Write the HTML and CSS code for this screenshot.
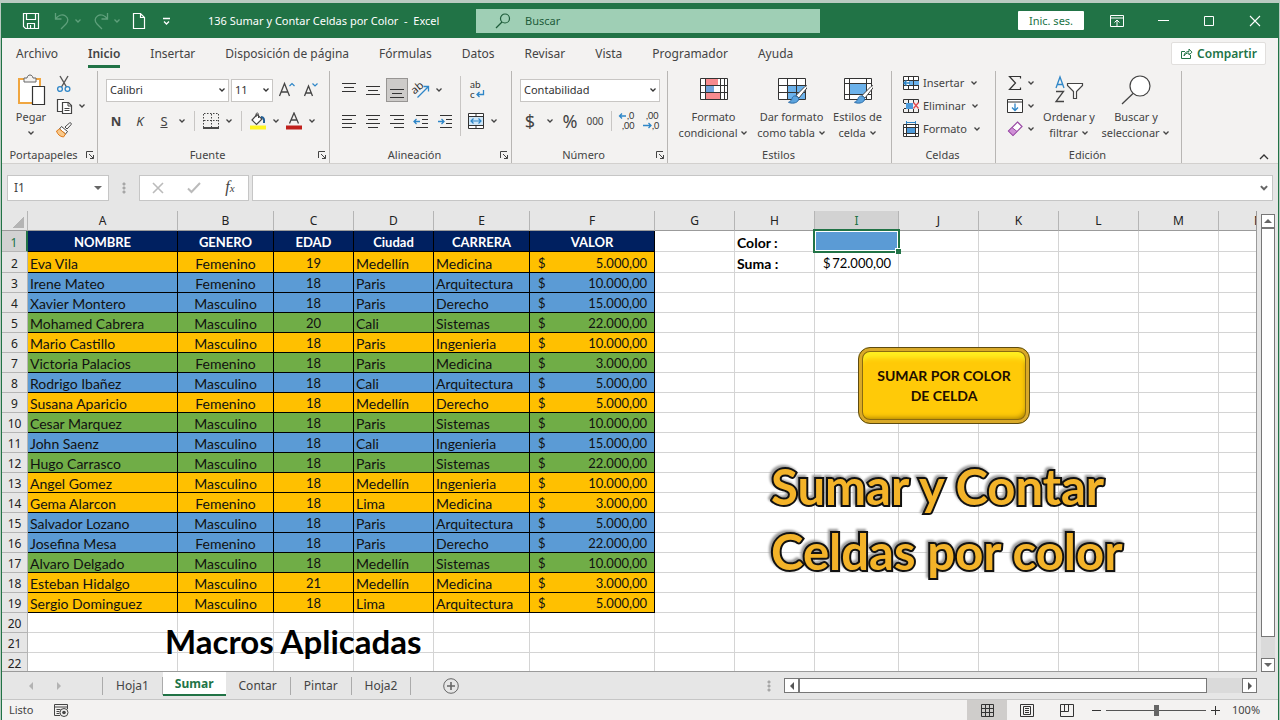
FILE: index.html
```
<!DOCTYPE html>
<html lang="es">
<head>
    <meta charset="UTF-8">
    <meta name="viewport" content="width=device-width, initial-scale=1.0">
    <title>136 Sumar y Contar Celdas por Color - Excel</title>
    <link rel="stylesheet" href="styles.css">
</head>
<body>
    <svg class="symbols" aria-hidden="true">
        <symbol id="chev" viewBox="0 0 8 8"><path d="M1.500 2.500L4 5l2.500-2.500" fill="none" stroke="currentColor" stroke-width="1.300"/></symbol>
        <symbol id="launch" viewBox="0 0 10 10"><path d="M1.500 8V1.500H8M4 4l4.500 4.500M8.500 5v3.500H5" fill="none" stroke="currentColor"/></symbol>
        <symbol id="brush" viewBox="0 0 22 20"><path d="M20.500 .5c1 .6 1 1.500.4 2.500L13 13l-3-2.500L19 1.500z" fill="#fff" stroke="#444"/><path d="M10 11c-2-.4-3.500.6-4 2.500-.4 1.800-1.500 3-3.500 3.800 3 1.500 8.500 1.200 10-2.300.6-1.500-.6-3.500-2.500-4z" fill="#5ba3dd" stroke="#2b6ca8"/></symbol>
    </svg>
    <div class="window">
        <header class="titlebar">
            <div class="quick">
                <button aria-label="Guardar"><svg width="18" height="18" viewBox="0 0 18 18"><path d="M1.500 1.500h15v15h-13l-2-2zM4.500 1.500v6h9v-6M5.500 16.500v-5h7v5M8.500 16v-3" fill="none" stroke="#fff" stroke-width="1.200"/></svg></button>
                <button class="off" aria-label="Deshacer"><svg width="16" height="18" viewBox="0 0 16 18"><path d="M1.500 1v6h6M1.500 7C4 3.500 8 1.800 11.500 4c3 2 3 5.500.5 8l-5 5" fill="none" stroke="currentColor" stroke-width="1.300"/></svg><svg width="8" height="8"><use href="#chev"/></svg></button>
                <button class="off" aria-label="Rehacer"><svg width="16" height="18" viewBox="0 0 16 18"><path d="M14.500 1v6h-6M14.500 7C12 3.500 8 1.800 4.500 4c-3 2-3 5.500-.5 8l5 5" fill="none" stroke="currentColor" stroke-width="1.300"/></svg><svg width="8" height="8"><use href="#chev"/></svg></button>
                <button aria-label="Nuevo"><svg width="14" height="18" viewBox="0 0 14 18"><path d="M1.500 1.500h7l4 4v11h-11zM8.500 1.500v4h4" fill="none" stroke="#fff" stroke-width="1.200"/></svg></button>
                <button aria-label="Personalizar"><svg width="9" height="8" viewBox="0 0 9 8"><path d="M1 1.500h7M2 4.500L4.500 7 7 4.500" fill="none" stroke="#fff" stroke-width="1.300"/></svg></button>
            </div>
            <h1 class="doc-title">136 Sumar y Contar Celdas por Color&nbsp; -&nbsp; Excel</h1>
            <label class="search">
                <svg width="16" height="16" viewBox="0 0 16 16"><circle cx="10" cy="5.500" r="4.500" fill="none" stroke="#1e5c3a" stroke-width="1.200"/><path d="M7 9l-6 6" stroke="#1e5c3a" stroke-width="1.200"/></svg>
                <input type="text" placeholder="Buscar" aria-label="Buscar">
            </label>
            <button class="signin">Inic. ses.</button>
            <div class="win-buttons">
                <button aria-label="Opciones de la cinta"><svg width="14" height="12" viewBox="0 0 14 12"><path d="M.5.5h13v11H.5zM.5 3h13M7 11V5M4.500 7.500L7 5l2.500 2.500" fill="none" stroke="#fff"/></svg></button>
                <button aria-label="Minimizar"><svg width="12" height="12" viewBox="0 0 12 12"><path d="M1 5.500h11" stroke="#fff"/></svg></button>
                <button aria-label="Maximizar"><svg width="12" height="12" viewBox="0 0 12 12"><path d="M1.500 1.500h9v9h-9z" fill="none" stroke="#fff"/></svg></button>
                <button aria-label="Cerrar"><svg width="12" height="12" viewBox="0 0 12 12"><path d="M1 1l10 10M11 1L1 11" stroke="#fff" stroke-width="1.100"/></svg></button>
            </div>
        </header>

        <nav class="tabs">
            <a href="#">Archivo</a>
            <a href="#" class="active">Inicio</a>
            <a href="#">Insertar</a>
            <a href="#">Disposición de página</a>
            <a href="#">Fórmulas</a>
            <a href="#">Datos</a>
            <a href="#">Revisar</a>
            <a href="#">Vista</a>
            <a href="#">Programador</a>
            <a href="#">Ayuda</a>
            <button class="share"><svg width="13" height="13" viewBox="0 0 13 13"><path d="M5 4.500H1.500v7h9V8M4 9c.3-3 2-4.500 5-4.500V2L12 5.200 9 8V6C6.500 6 5 7 4 9z" fill="none" stroke="#217346"/></svg>Compartir</button>
        </nav>

        <section class="ribbon">
            <div class="group clipboard">
                <div class="tools">
                    <button class="big"><svg width="30" height="32" viewBox="0 0 30 32"><path d="M3 5h21v24H3z" fill="#fff" stroke="#f0a640" stroke-width="2"/><path d="M8 8V4h3c.4-2 1.500-3 3-3s2.600 1 3 3h3v4z" fill="#f3f2f1" stroke="#666"/><path d="M16.500 12.500h12v18h-12z" fill="#fff" stroke="#333" stroke-width="1.200"/></svg><span>Pegar</span><svg width="8" height="16"><use href="#chev"/></svg></button>
                    <div class="stack">
                        <button class="ico" aria-label="Cortar"><svg width="16" height="18" viewBox="0 0 16 18"><path d="M4 1l6.500 11M12 1L5.500 12" stroke="#555" stroke-width="1.400"/><circle cx="4" cy="14" r="2.400" fill="none" stroke="#2e86c8" stroke-width="1.300"/><circle cx="11.500" cy="14" r="2.400" fill="none" stroke="#2e86c8" stroke-width="1.300"/></svg></button>
                        <button class="ico" aria-label="Copiar"><svg width="17" height="17" viewBox="0 0 17 17"><path d="M6 13.500H1.500v-12H8M6.500 4.500h6l3 3v8h-9z" fill="#fff" stroke="#444" stroke-width="1.200"/><path d="M12 4.500V8h3.500M8.500 10.500h5M8.500 12.500h5" fill="none" stroke="#444"/></svg></button>
                        <button class="ico" aria-label="Copiar formato"><svg width="18" height="16" viewBox="0 0 18 16"><path d="M10 5l4.500-4c1-.8 2.500.6 1.500 1.700L12 7z" fill="#fff" stroke="#444"/><path d="M6.500 4.500l6 5-2 2.500-6-5z" fill="#fff" stroke="#444"/><path d="M4.500 7l6 5-2 3C5 14.500 2.500 12.500 1.500 9z" fill="#f9c98b" stroke="#e07b1a"/></svg></button>
                    </div>
                    <button class="more middle" aria-label="Opciones de copia"><svg width="8" height="8"><use href="#chev"/></svg></button>
                </div>
                <footer><span>Portapapeles</span><button aria-label="Más"><svg width="10" height="10"><use href="#launch"/></svg></button></footer>
            </div>

            <div class="group font">
                <div class="tools rows">
                    <div class="line">
                        <select class="family" aria-label="Fuente"><option>Calibri</option></select>
                        <select class="size" aria-label="Tamaño"><option>11</option></select>
                        <button class="ico" aria-label="Aumentar"><svg width="18" height="18" viewBox="0 0 18 18"><path d="M1.500 15L6.500 2.500 11.500 15M3.200 11h6.600" fill="none" stroke="#444" stroke-width="1.300"/><path d="M11.500 5L14 2.500 16.500 5" fill="none" stroke="#2e86c8" stroke-width="1.200"/></svg></button>
                        <button class="ico" aria-label="Disminuir"><svg width="18" height="18" viewBox="0 0 18 18"><path d="M2.500 15l4-10 4 10M3.800 12h5.400" fill="none" stroke="#444" stroke-width="1.300"/><path d="M10.500 2.500L13 5l2.500-2.500" fill="none" stroke="#2e86c8" stroke-width="1.200"/></svg></button>
                    </div>
                    <div class="line">
                        <button class="ico"><b>N</b></button>
                        <button class="ico"><i>K</i></button>
                        <button class="ico"><u>S</u></button>
                        <button class="more" aria-label="Subrayado"><svg width="8" height="8"><use href="#chev"/></svg></button>
                        <span class="rule"></span>
                        <button class="ico" aria-label="Bordes"><svg width="16" height="16" viewBox="0 0 16 16"><path d="M1 .5h15M.5 1v13M15.500 1v13M8.500 1v13M1 7.500h14" fill="none" stroke="#444" stroke-dasharray="1.500 1.500"/><path d="M0 15h16" stroke="#111" stroke-width="1.500"/></svg></button>
                        <button class="more" aria-label="Más bordes"><svg width="8" height="8"><use href="#chev"/></svg></button>
                        <span class="rule"></span>
                        <button class="ico" aria-label="Color de relleno"><svg width="18" height="18" viewBox="0 0 18 18"><path d="M8 2.500L3 8l4.500 4.500L13 7z" fill="#fff" stroke="#444" stroke-width="1.200"/><path d="M7 5V2.500C7 .5 9.500.5 9.500 2.500V6" fill="none" stroke="#444"/><path d="M12 5c2.500 0 3.500 2 3 6" fill="none" stroke="#1f5c93" stroke-width="2"/><path d="M1 13.500h16v4H1z" fill="#fff420"/></svg></button>
                        <button class="more" aria-label="Más rellenos"><svg width="8" height="8"><use href="#chev"/></svg></button>
                        <button class="ico" aria-label="Color de fuente"><svg width="18" height="18" viewBox="0 0 18 18"><path d="M4.500 11.500L9 1l4.500 10.500M6 8h6" fill="none" stroke="#444" stroke-width="1.300"/><path d="M1 13.500h16v4H1z" fill="#c0201c"/></svg></button>
                        <button class="more" aria-label="Más colores"><svg width="8" height="8"><use href="#chev"/></svg></button>
                    </div>
                </div>
                <footer><span>Fuente</span><button aria-label="Más"><svg width="10" height="10"><use href="#launch"/></svg></button></footer>
            </div>

            <div class="group align">
                <div class="tools">
                    <div class="rows">
                        <div class="line">
                            <button class="ico" aria-label="Arriba"><svg width="16" height="16" viewBox="0 0 16 16"><path d="M1 1.500h14M3 5.500h10M1 9.500h14" stroke="#333" stroke-width="1.200"/></svg></button>
                            <button class="ico" aria-label="Medio"><svg width="16" height="16" viewBox="0 0 16 16"><path d="M1 4.500h14M3 8.500h10M1 12.500h14" stroke="#333" stroke-width="1.200"/></svg></button>
                            <button class="ico on" aria-label="Abajo"><svg width="16" height="16" viewBox="0 0 16 16"><path d="M1 7.500h14M3 11.500h10M1 15.500h14" stroke="#333" stroke-width="1.200"/></svg></button>
                            <button class="ico" aria-label="Orientación"><svg width="24" height="24" viewBox="0 0 24 24"><text x="3" y="14" font-size="11" fill="#333" transform="rotate(-40 8 12)">ab</text><path d="M8.500 19.500L19 9M14.500 8.500H19.500V13.500" fill="none" stroke="#2e86c8" stroke-width="1.300"/></svg></button>
                            <button class="more" aria-label="Más orientación"><svg width="8" height="8"><use href="#chev"/></svg></button>
                        </div>
                        <div class="line">
                            <button class="ico" aria-label="Izquierda"><svg width="16" height="16" viewBox="0 0 16 16"><path d="M1 2.500h14M1 6.500h10M1 10.500h14M1 14.500h10" stroke="#333" stroke-width="1.200"/></svg></button>
                            <button class="ico" aria-label="Centrar"><svg width="16" height="16" viewBox="0 0 16 16"><path d="M1 2.500h14M3 6.500h10M1 10.500h14M3 14.500h10" stroke="#333" stroke-width="1.200"/></svg></button>
                            <button class="ico" aria-label="Derecha"><svg width="16" height="16" viewBox="0 0 16 16"><path d="M1 2.500h14M5 6.500h10M1 10.500h14M5 14.500h10" stroke="#333" stroke-width="1.200"/></svg></button>
                            <button class="ico" aria-label="Disminuir sangría"><svg width="16" height="16" viewBox="0 0 16 16"><path d="M3 2.500h12M9 6.500h6M9 10.500h6M3 14.500h12" stroke="#333" stroke-width="1.200"/><path d="M7 8.500H1M3.500 6L1 8.500 3.500 11" fill="none" stroke="#2e86c8" stroke-width="1.300"/></svg></button>
                            <button class="ico" aria-label="Aumentar sangría"><svg width="16" height="16" viewBox="0 0 16 16"><path d="M3 2.500h12M9 6.500h6M9 10.500h6M3 14.500h12" stroke="#333" stroke-width="1.200"/><path d="M1 8.500h6M4.500 6L7 8.500 4.500 11" fill="none" stroke="#2e86c8" stroke-width="1.300"/></svg></button>
                        </div>
                    </div>
                    <span class="rule tall"></span>
                    <div class="rows">
                        <div class="line">
                            <button class="ico" aria-label="Ajustar texto"><svg class="glyphs" width="20" height="24" viewBox="0 0 20 24"><text x="4" y="10" font-size="10">ab</text><text x="4" y="20" font-size="10">c</text><path d="M17.500 12v4.500H11M13.500 14L11 16.500l2.500 2.500" fill="none" stroke="#2e86c8" stroke-width="1.300"/></svg></button>
                        </div>
                        <div class="line">
                            <button class="ico" aria-label="Combinar"><svg width="16" height="16" viewBox="0 0 16 16"><path d="M.5.5h15v15H.5zM.5 3.500h15M.5 12.500h15M8 .5v3M8 12.500v3" fill="#fff" stroke="#333"/><path d="M1 4h14v8H1z" fill="#cfe6f7"/><path d="M3 8h10M5.500 5.500L3 8l2.500 2.500M10.500 5.500L13 8l-2.500 2.500" fill="none" stroke="#2e86c8" stroke-width="1.200"/></svg></button>
                            <button class="more" aria-label="Más combinar"><svg width="8" height="8"><use href="#chev"/></svg></button>
                        </div>
                    </div>
                </div>
                <footer><span>Alineación</span><button aria-label="Más"><svg width="10" height="10"><use href="#launch"/></svg></button></footer>
            </div>

            <div class="group number">
                <div class="tools rows">
                    <div class="line">
                        <select class="format" aria-label="Formato de número"><option>Contabilidad</option></select>
                    </div>
                    <div class="line">
                        <button class="ico large">$</button>
                        <button class="more" aria-label="Monedas"><svg width="8" height="8"><use href="#chev"/></svg></button>
                        <button class="ico large">%</button>
                        <button class="ico zeros">000</button>
                        <span class="rule"></span>
                        <button class="ico" aria-label="Aumentar decimales"><svg class="glyphs" width="20" height="24" viewBox="0 0 20 24"><text x="10" y="10" font-size="9">,0</text><text x="5" y="20" font-size="9">,00</text><path d="M9 7H2.500M5 4.500L2.500 7 5 9.500" fill="none" stroke="#2e86c8" stroke-width="1.300"/></svg></button>
                        <button class="ico" aria-label="Disminuir decimales"><svg class="glyphs" width="20" height="24" viewBox="0 0 20 24"><text x="5" y="10" font-size="9">,00</text><text x="11" y="20" font-size="9">,0</text><path d="M2 16.500h8M7.500 14L10 16.500 7.500 19" fill="none" stroke="#2e86c8" stroke-width="1.300"/></svg></button>
                    </div>
                </div>
                <footer><span>Número</span><button aria-label="Más"><svg width="10" height="10"><use href="#launch"/></svg></button></footer>
            </div>

            <div class="group styles">
                <div class="tools">
                    <button class="big"><svg width="30" height="32" viewBox="0 0 30 32"><path d="M1.500 4.500h27v21h-27z" fill="#fff" stroke="#333"/><path d="M7 5h12v7H7zM7 18h14v7H7z" fill="#f78b8f"/><path d="M7 12h8v6H7z" fill="#6fa3dc"/><path d="M6.500 5v20M21.500 5v20M25.500 5v20M2 11.500h26M2 18.500h26" stroke="#333" fill="none"/></svg><span>Formato<br>condicional <svg width="8" height="8"><use href="#chev"/></svg></span></button>
                    <button class="big"><svg width="30" height="32" viewBox="0 0 30 32"><path d="M1.500 4.500h27v21h-27z" fill="#fff" stroke="#333"/><path d="M11 11h17v14H11z" fill="#6cb2eb"/><path d="M10.500 5v20M19.500 5v20M2 11.500h26M2 18.500h26" stroke="#333" fill="none"/><use href="#brush" x="9" y="11" width="22" height="20"/></svg><span>Dar formato<br>como tabla <svg width="8" height="8"><use href="#chev"/></svg></span></button>
                    <button class="big"><svg width="30" height="32" viewBox="0 0 30 32"><path d="M1.500 4.500h27v21h-27z" fill="#fff" stroke="#333"/><path d="M6.500 5v20M23.500 5v20M2 9.500h26M2 20.500h26" stroke="#333" fill="none"/><path d="M7 10h16v10H7z" fill="#6cb2eb"/><use href="#brush" x="9" y="11" width="22" height="20"/></svg><span>Estilos de<br>celda <svg width="8" height="8"><use href="#chev"/></svg></span></button>
                </div>
                <footer><span>Estilos</span></footer>
            </div>

            <div class="group cells">
                <div class="tools">
                    <div class="stack">
                        <button class="wide"><svg width="16" height="16" viewBox="0 0 16 16"><path d="M.5 1.500h15v13H.5z" fill="#fff" stroke="#333"/><path d="M6 5h10v6H6z" fill="#6cb2eb"/><path d="M5.500 2v3M10.500 2v12M5.500 11v3M1 5.500h15M1 10.500h15" stroke="#333" fill="none"/><path d="M7 8H1M3.500 5.500L1 8l2.500 2.500" fill="none" stroke="#2e86c8" stroke-width="1.500"/></svg>Insertar<svg class="end" width="8" height="8"><use href="#chev"/></svg></button>
                        <button class="wide"><svg width="16" height="16" viewBox="0 0 16 16"><path d="M.5 5V1.500h15V5M.5 11v3.500h15V11M5.500 2v12M10.500 2v3M10.500 11v3M1 5.500h9M1 10.500h9" stroke="#333" fill="none"/><path d="M3 5h7v6H3z" fill="#4d9bdc"/><path d="M10.500 4.500l5 6M15.500 4.500l-5 6" stroke="#e0484d" stroke-width="1.300"/></svg>Eliminar<svg class="end" width="8" height="8"><use href="#chev"/></svg></button>
                        <button class="wide"><svg width="16" height="16" viewBox="0 0 16 16"><path d="M.5 3.500h15v12H.5z" fill="#fff" stroke="#333"/><path d="M4 7h8v5H4z" fill="#4d9bdc"/><path d="M3.500 3v12M12.500 3v12M1 6.500h15M1 12.500h15" stroke="#333" fill="none"/><path d="M3.500 1.500h9M3.500 0v3M12.500 0v3" stroke="#2e86c8"/></svg>Formato<svg class="end" width="8" height="8"><use href="#chev"/></svg></button>
                    </div>
                </div>
                <footer><span>Celdas</span></footer>
            </div>

            <div class="group editing">
                <div class="tools">
                    <div class="stack">
                        <button class="wide" aria-label="Autosuma"><svg width="16" height="16" viewBox="0 0 16 16"><path d="M13.500 3.500v-2h-11l6 6.500-6 6.500h11v-2" fill="none" stroke="#333" stroke-width="1.200"/></svg><svg class="end" width="8" height="8"><use href="#chev"/></svg></button>
                        <button class="wide" aria-label="Rellenar"><svg width="16" height="16" viewBox="0 0 16 16"><path d="M.5 1.500h15v13H.5zM.5 4h15" fill="#fff" stroke="#333"/><path d="M8 5.500V12M5 9.500l3 3 3-3" fill="none" stroke="#2e86c8" stroke-width="1.300"/></svg><svg class="end" width="8" height="8"><use href="#chev"/></svg></button>
                        <button class="wide" aria-label="Borrar"><svg width="16" height="16" viewBox="0 0 16 16"><path d="M10.500 1L15 5.500 6 14.500 1.500 10z" fill="#fff" stroke="#9a4aa5" stroke-width="1.200"/><path d="M5 6.500l5 4-4 4L1.500 10z" fill="#cf8fd6" stroke="#9a4aa5"/></svg><svg class="end" width="8" height="8"><use href="#chev"/></svg></button>
                    </div>
                    <button class="big"><svg width="30" height="32" viewBox="0 0 30 32"><path d="M2 14L6 3l4 11M3.500 10.500h5" fill="none" stroke="#2e86c8" stroke-width="1.300"/><path d="M2 17.500h7.500l-7.500 10h8" fill="none" stroke="#444" stroke-width="1.300"/><path d="M13.500 9.500h15v2l-6 6v7h-3v-7l-6-6z" fill="#fff" stroke="#444" stroke-width="1.200"/></svg><span>Ordenar y<br>filtrar <svg width="8" height="8"><use href="#chev"/></svg></span></button>
                    <button class="big"><svg width="30" height="32" viewBox="0 0 30 32"><circle cx="19" cy="12" r="10" fill="#fff" stroke="#444" stroke-width="1.200"/><path d="M12 19.500L1 30" stroke="#444" stroke-width="1.300"/></svg><span>Buscar y<br>seleccionar <svg width="8" height="8"><use href="#chev"/></svg></span></button>
                </div>
                <footer><span>Edición</span></footer>
            </div>
            <button class="collapse" aria-label="Contraer la cinta"><svg width="10" height="8" viewBox="0 0 10 8"><path d="M1 6l4-4 4 4" fill="none" stroke="#333" stroke-width="1.300"/></svg></button>
        </section>

        <section class="formula">
            <div class="name-box"><input type="text" value="I1" aria-label="Cuadro de nombres"><span class="arrow down"></span></div>
            <span class="dots"></span>
            <div class="fx">
                <button aria-label="Cancelar"><svg width="12" height="12" viewBox="0 0 12 12"><path d="M1 1l10 10M11 1L1 11" stroke="#bbb" stroke-width="1.600"/></svg></button>
                <button aria-label="Introducir"><svg width="14" height="12" viewBox="0 0 14 12"><path d="M1 6.500L4.500 10 13 1" fill="none" stroke="#bbb" stroke-width="2"/></svg></button>
                <button class="fn"><i>f<small>x</small></i></button>
            </div>
            <div class="formula-box"><input type="text" aria-label="Barra de fórmulas"><svg width="10" height="10" viewBox="0 0 8 8"><path d="M1.500 2.500L4 5l2.500-2.500" fill="none" stroke="#666" stroke-width="1.600"/></svg></div>
        </section>

        <main class="sheet">
            <div class="grid">
                <table id="cells"></table>
                <button class="macro">SUMAR POR COLOR<br>DE CELDA</button>
                <p class="wordart">Sumar y Contar<br>Celdas por color</p>
                <p class="caption">Macros Aplicadas</p>
            </div>
            <div class="vscroll">
                <button aria-label="Subir"><span class="arrow up"></span></button>
                <div class="track"><div class="thumb"></div></div>
                <button aria-label="Bajar"><span class="arrow down"></span></button>
            </div>
        </main>

        <nav class="sheets">
            <div class="sheet-nav"><span class="arrow left"></span><span class="arrow right"></span></div>
            <a href="#">Hoja1</a>
            <a href="#" class="active">Sumar</a>
            <a href="#">Contar</a>
            <a href="#">Pintar</a>
            <a href="#">Hoja2</a>
            <button class="add" aria-label="Hoja nueva"><svg width="16" height="16" viewBox="0 0 16 16"><circle cx="8" cy="8" r="7.300" fill="none" stroke="#666"/><path d="M8 4v8M4 8h8" stroke="#666" stroke-width="1.600"/></svg></button>
            <span class="dots"></span>
            <div class="hscroll">
                <button aria-label="Izquierda"><span class="arrow left"></span></button>
                <div class="track"><div class="thumb"></div></div>
                <button aria-label="Derecha"><span class="arrow right"></span></button>
            </div>
        </nav>

        <footer class="status">
            <span>Listo</span>
            <button class="record" aria-label="Grabar macro"><svg width="15" height="13" viewBox="0 0 15 13"><path d="M6 11.500H.5V.5h13V5M.5 3h13M2.500 5.500h4M2.500 7.500h3M2.500 9.500h3" fill="none" stroke="#444"/><circle cx="10" cy="8.500" r="4" fill="#f3f2f1" stroke="#444"/><circle cx="10" cy="8.500" r="1.800" fill="#444"/></svg></button>
            <div class="views">
                <button class="on" aria-label="Normal"><svg width="13" height="13" viewBox="0 0 13 13"><path d="M.5.5h12v12H.5zM.5 4.500h12M.5 8.500h12M4.500.5v12M8.500.5v12" fill="none" stroke="#333"/></svg></button>
                <button aria-label="Diseño de página"><svg width="14" height="13" viewBox="0 0 14 13"><path d="M.5.5h13v12H.5zM3.500 2.500h7v8h-7zM5 4.500h4M5 6.500h4M5 8.500h4" fill="none" stroke="#333"/></svg></button>
                <button aria-label="Saltos de página"><svg width="14" height="13" viewBox="0 0 14 13"><path d="M.5.500h13v12H.5zM.5 7.500h8V.5M4.500.5v7" fill="none" stroke="#333"/></svg></button>
            </div>
            <div class="zoom">
                <button aria-label="Alejar"><svg width="9" height="9" viewBox="0 0 9 9"><path d="M0 4.500h9" stroke="#333"/></svg></button>
                <input type="range" min="0" max="100" value="50" aria-label="Zoom">
                <button aria-label="Acercar"><svg width="9" height="9" viewBox="0 0 9 9"><path d="M0 4.500h9M4.500 0v9" stroke="#333"/></svg></button>
                <span>100%</span>
            </div>
        </footer>
    </div>
    <script src="sheet.js"></script>
</body>
</html>
```

FILE: styles.css
```
* {
    box-sizing: border-box;
}
body {
    margin: 0;
    padding: 3px 1px 0;
    height: 100vh;
    overflow: hidden;
    background: #b9cbc1;
    color: #444;
    font-family: "Noto Sans", "Open Sans", sans-serif;
    font-size: 12px;
    line-height: 16px;
}
button, input, select {
    font: inherit;
    color: inherit;
    margin: 0;
    padding: 0;
    border: 0;
    background: none;
}
button {
    display: flex;
    align-items: center;
    justify-content: center;
}
a {
    color: inherit;
    text-decoration: none;
}
svg {
    flex: none;
}
.symbols {
    display: none;
}
.window {
    display: flex;
    flex-direction: column;
    height: 100%;
    border: 1px solid #217346;
    border-width: 0 1px;
    background: #f3f2f1;
}

/* Title bar */
.titlebar {
    display: flex;
    align-items: center;
    height: 35px;
    flex: none;
    background: #217346;
    color: #fff;
    font-size: 11px;
}
.quick {
    display: flex;
    align-items: center;
    gap: 14px;
    padding-left: 20px;
    width: 206px;
}
.quick button {
    gap: 6px;
}
.quick .off {
    color: #5fa07c;
    gap: 4px;
    margin-right: -3px;
}
.quick button:last-child {
    margin-left: 2px;
}
.doc-title {
    margin: 0;
    width: 268px;
    font-size: 11px;
    font-weight: 400;
    white-space: nowrap;
}
.search {
    display: flex;
    align-items: center;
    gap: 14px;
    flex: 0 1 344px;
    height: 24px;
    padding-left: 19px;
    background: #9fcfb5;
}
.search input {
    flex: 1;
    min-width: 0;
}
.search input::placeholder {
    color: #1e5c3a;
    opacity: 1;
}
.signin {
    width: 66px;
    height: 19px;
    margin-left: auto;
    border-radius: 1px;
    background: #fff;
    color: #217346;
}
.win-buttons {
    display: flex;
    padding-left: 10px;
}
.win-buttons button {
    width: 46px;
}

/* Ribbon tabs */
.tabs {
    display: flex;
    align-items: center;
    gap: 30px;
    flex: none;
    height: 31px;
    padding: 0 12px 0 14px;
}
.tabs a {
    padding: 6px 0 3px;
    border-bottom: 3px solid transparent;
    white-space: nowrap;
}
.tabs .active {
    border-color: #217346;
    font-weight: 600;
}
.share {
    gap: 4px;
    width: 95px;
    height: 23px;
    margin-left: auto;
    border: 1px solid #e1dfdd;
    border-radius: 2px;
    background: #fff;
    color: #217346;
    font-weight: 600;
}

/* Ribbon */
.ribbon {
    display: flex;
    align-items: flex-end;
    flex: none;
    height: 95px;
    border-bottom: 1px solid #d2d0ce;
    font-size: 11px;
}
.group {
    display: flex;
    flex-direction: column;
    flex: none;
    height: 92px;
    border-right: 1px solid #b8b6b4;
}
.group footer {
    display: flex;
    align-items: center;
    height: 16px;
    padding-right: 2px;
}
.group footer span {
    flex: 1;
    text-align: center;
}
.tools {
    display: flex;
    flex: 1;
}
.rows {
    display: flex;
    flex-direction: column;
    gap: 7px;
    padding-top: 7px;
}
.line {
    display: flex;
    align-items: center;
    height: 24px;
}
.ico {
    width: 24px;
    height: 24px;
    font-size: 13px;
}
.ico.on {
    width: 22px;
    margin: 0 1px;
    border: 1px solid #979593;
    background: #cdcbc9;
}
.ico.large {
    font-size: 18px;
}
.ico.zeros {
    font-size: 10px;
}
.glyphs {
    font-family: Lato, sans-serif;
    fill: #333;
}
.more {
    width: 12px;
    height: 22px;
}
.more.middle {
    margin-top: 24px;
}
.rule {
    width: 1px;
    height: 20px;
    margin: 0 6px;
    background: #c8c6c4;
}
.rule.tall {
    height: 60px;
    margin: 5px 3px 0;
}
.stack {
    display: flex;
    flex-direction: column;
}
.stack button {
    height: 23px;
}
.big {
    flex-direction: column;
    justify-content: flex-start;
    padding-top: 3px;
    white-space: nowrap;
}
.big > span {
    padding-top: 3px;
}
.wide {
    gap: 4px;
    justify-content: flex-start;
}
select {
    appearance: none;
    height: 23px;
    padding-left: 3px;
    border: 1px solid #c8c6c4;
    background: #fff url("data:image/svg+xml,%3Csvg xmlns='http://www.w3.org/2000/svg' viewBox='0 0 8 8'%3E%3Cpath d='M1.500 2.500L4 5l2.500-2.500' fill='none' stroke='%23333' stroke-width='1.300'/%3E%3C/svg%3E") no-repeat right 2px center / 8px;
    color: #333;
}
.clipboard {
    width: 96px;
}
.clipboard .tools {
    padding-left: 8px;
}
.clipboard .stack {
    padding-top: 1px;
}
.clipboard .big {
    width: 42px;
}
.font {
    width: 232px;
}
.font .tools {
    padding-left: 6px;
}
.font .line:last-child .rule {
    margin: 0 4px 0 6px;
}
.family {
    width: 123px;
    margin: 0 2px;
}
.size {
    width: 42px;
    margin-right: 2px;
}
.align {
    width: 182px;
}
.align .tools {
    padding-left: 7px;
}
.number {
    width: 156px;
}
.number .tools {
    padding-left: 6px;
}
.number .rule {
    margin: 0 3px;
}
.number .large + .more {
    width: 16px;
}
.number .zeros {
    width: 26px;
}
.format {
    width: 140px;
    margin-left: 2px;
}
.styles {
    width: 224px;
}
.styles .tools {
    justify-content: center;
}
.styles .big {
    width: 78px;
}
.styles .big:last-child {
    width: 54px;
}
.cells {
    width: 104px;
}
.cells .tools {
    padding-left: 11px;
}
.cells .end {
    margin-left: 2px;
}
.editing {
    width: 186px;
}
.editing .tools {
    padding-left: 11px;
}
.editing .big {
    width: 66px;
    margin-left: 1px;
}
.collapse {
    margin-left: auto;
    padding: 0 9px 2px;
}

/* Formula bar */
.formula {
    display: flex;
    align-items: center;
    flex: none;
    height: 47px;
    padding: 0 5px;
    background: #e6e6e6;
}
.name-box, .fx, .formula-box {
    display: flex;
    align-items: center;
    height: 26px;
    border: 1px solid #c6c6c6;
    background: #fff;
}
.name-box {
    width: 102px;
    padding: 0 6px;
}
.name-box input, .formula-box input {
    flex: 1;
    min-width: 0;
}
.dots {
    width: 30px;
    height: 12px;
    background: radial-gradient(circle, #a6a6a6 1px, transparent 2px) center / 30px 4px;
}
.fx {
    width: 110px;
    margin-right: 3px;
}
.fx button {
    flex: 1;
}
.fn {
    font-family: "Liberation Serif", serif;
    font-size: 16px;
}
.fn small {
    font-size: 11px;
}
.formula-box {
    flex: 1;
    padding-right: 3px;
}
.arrow {
    width: 0;
    height: 0;
    border: 4px solid transparent;
}
.arrow.down {
    border-top-color: #666;
    border-bottom: 0;
}
.arrow.up {
    border-bottom-color: #666;
    border-top: 0;
}
.arrow.left {
    border-right-color: #555;
    border-left: 0;
}
.arrow.right {
    border-left-color: #555;
    border-right: 0;
}

/* Cells */
.sheet {
    display: flex;
    flex: 1;
    min-height: 0;
    background: #e6e6e6;
}
.grid {
    position: relative;
    flex: 1;
    min-width: 0;
    overflow: hidden;
    border-right: 1px solid #9b9b9b;
    border-bottom: 1px solid #9b9b9b;
}
table {
    table-layout: fixed;
    width: 1457px;
    border-spacing: 0;
    background: #fff;
    color: #111;
    font-family: Lato, sans-serif;
    font-size: 14px;
    line-height: 17px;
}
th, td {
    height: 20px;
    padding: 2px 2px 0;
    border: 1px solid #d4d4d4;
    border-width: 0 1px 1px 0;
    text-align: left;
    white-space: nowrap;
}
.tall th, .tall td {
    height: 21px;
}
thead th, tbody th {
    padding: 0;
    border-color: #b5b5b5;
    background: #e6e6e6;
    color: #222;
    font-family: "Noto Sans", sans-serif;
    font-size: 12px;
    font-weight: 400;
    text-align: center;
}
tbody th {
    padding-top: 2px;
}
thead th {
    border-bottom-color: #9b9b9b;
}
thead th.current {
    background: #d2d2d2;
    color: #217346;
}
tbody th.current {
    background: #d2d2d2;
    color: #217346;
    border-right: 2px solid #217346;
}
thead .corner {
    background: linear-gradient(135deg, transparent 50%, #b4b4b4 50%) no-repeat 10px 6px / 12px 11px #e6e6e6;
}
.head td {
    border-color: #000;
    background: #002060;
    color: #fff;
    font-size: 13px;
    font-weight: bold;
    text-align: center;
}
.orange td { background: #ffc000; }
.blue td { background: #5b9bd5; }
.green td { background: #70ad47; }
.orange td, .blue td, .green td {
    border-color: #000;
}
.head .free, .orange .free, .blue .free, .green .free {
    border-color: #d4d4d4;
    background: #fff;
    color: #000;
    font-size: 14px;
    text-align: left;
}
tbody td.center {
    text-align: center;
}
.orange .money, .blue .money, .green .money, .age {
    font-size: 13px;
}
.money > span {
    display: flex;
    justify-content: space-between;
    padding: 0 5px 0 6px;
}
.strong {
    font-weight: bold;
}
.head .selected {
    position: relative;
    background: #5b9bd5;
}
/* selection frame lies over the neighbouring gridlines */
.selected::before {
    content: "";
    position: absolute;
    inset: -2px;
    border: 2px solid #217346;
    box-shadow: inset 0 0 0 1px #fff;
}
.selected::after {
    content: "";
    position: absolute;
    right: -3px;
    bottom: -3px;
    width: 5px;
    height: 5px;
    border: 1px solid #fff;
    border-width: 1px 0 0 1px;
    background: #217346;
}

/* Shapes drawn over the cells */
.macro {
    position: absolute;
    left: 856px;
    top: 136px;
    width: 172px;
    height: 77px;
    border: 1px solid #5d4b10;
    border-radius: 12px;
    background: #ffca08;
    box-shadow: inset 0 0 0 3px #d9a928, inset 0 0 0 4px #8a6a10, inset 0 10px 5px #ffee20, inset -3px -5px 5px #a87f00;
    color: #200d00;
    font-family: Lato, sans-serif;
    font-size: 14px;
    font-weight: bold;
    line-height: 20px;
}
.wordart {
    position: absolute;
    left: 769px;
    top: 243px;
    margin: 0;
    color: #f3b329;
    font-family: Lato, sans-serif;
    font-size: 49px;
    font-weight: bold;
    line-height: 65px;
    white-space: nowrap;
    -webkit-text-stroke: 4px #111;
    paint-order: stroke fill;
    filter: drop-shadow(-2px -2px 1px #999);
}
.caption {
    position: absolute;
    left: 163px;
    top: 410px;
    margin: 0;
    color: #000;
    font-family: Lato, sans-serif;
    font-size: 33px;
    font-weight: bold;
    line-height: 40px;
    white-space: nowrap;
}

/* Scroll bars */
.vscroll {
    display: flex;
    flex-direction: column;
    width: 21px;
    padding: 3px 4px 0;
}
.vscroll button, .hscroll button {
    width: 14px;
    height: 14px;
    border: 1px solid #777;
    background: #fff;
}
.track {
    flex: 1;
    background: #dadada;
}
.thumb {
    border: 1px solid #777;
    background: #fff;
}
.vscroll .track {
    width: 14px;
}
.vscroll .thumb {
    height: 95%;
}
.hscroll {
    display: flex;
    flex: 0 1 473px;
    height: 15px;
}
.hscroll button {
    width: 15px;
    height: 15px;
}
.hscroll .thumb {
    width: 92%;
    height: 15px;
}

/* Sheet tabs */
.sheets {
    display: flex;
    align-items: center;
    flex: none;
    height: 28px;
    padding-right: 21px;
    border-bottom: 1px solid #c6c6c6;
    background: #e6e6e6;
}
.sheet-nav {
    display: flex;
    gap: 24px;
    width: 100px;
    padding-left: 27px;
    opacity: .35;
}
.sheets a {
    padding: 1px 13px;
    border-right: 1px solid #ababab;
}
.sheet-nav + a {
    border-left: 1px solid #ababab;
}
.sheets .active {
    align-self: flex-start;
    height: 24px;
    padding: 4px 12px 0;
    border-right: 0;
    border-bottom: 2px solid #217346;
    background: #fff;
    color: #217346;
    font-weight: bold;
}
.add {
    margin-left: 32px;
}
.sheets .dots {
    margin-left: auto;
}

/* Status bar */
.status {
    display: flex;
    align-items: center;
    flex: none;
    height: 20px;
    padding: 0 19px 0 7px;
    font-size: 11px;
}
.record {
    margin-left: 20px;
}
.views {
    display: flex;
    align-self: stretch;
    margin-left: auto;
}
.views button {
    width: 40px;
}
.views .on {
    background: #cfcdcb;
}
.zoom {
    display: flex;
    align-items: center;
    gap: 5px;
    padding-left: 5px;
}
.zoom span {
    width: 34px;
    padding-left: 7px;
}
.zoom input {
    appearance: none;
    width: 100px;
    height: 13px;
    background: linear-gradient(#555, #555) no-repeat center / 100% 1px;
}
.zoom input::-webkit-slider-thumb {
    appearance: none;
    width: 5px;
    height: 11px;
    background: #666;
}
```

FILE: sheet.js
```
const widths = [26, 150, 96, 80, 80, 96, 125, 80, 80, 84, 80, 80, 80, 80, 80, 80, 80];
const letters = 'ABCDEFGHIJKLMNOP'.split('');

const rows = [
    ['head', 'NOMBRE', 'GENERO', 'EDAD', 'Ciudad', 'CARRERA', 'VALOR'],
    ['orange', 'Eva Vila', 'Femenino', 19, 'Medellín', 'Medicina', '5.000,00'],
    ['blue', 'Irene Mateo', 'Femenino', 18, 'Paris', 'Arquitectura', '10.000,00'],
    ['blue', 'Xavier Montero', 'Masculino', 18, 'Paris', 'Derecho', '15.000,00'],
    ['green', 'Mohamed Cabrera', 'Masculino', 20, 'Cali', 'Sistemas', '22.000,00'],
    ['orange', 'Mario Castillo', 'Masculino', 18, 'Paris', 'Ingenieria', '10.000,00'],
    ['green', 'Victoria Palacios', 'Femenino', 18, 'Paris', 'Medicina', '3.000,00'],
    ['blue', 'Rodrigo Ibañez', 'Masculino', 18, 'Cali', 'Arquitectura', '5.000,00'],
    ['orange', 'Susana Aparicio', 'Femenino', 18, 'Medellín', 'Derecho', '5.000,00'],
    ['green', 'Cesar Marquez', 'Masculino', 18, 'Paris', 'Sistemas', '10.000,00'],
    ['blue', 'John Saenz', 'Masculino', 18, 'Cali', 'Ingenieria', '15.000,00'],
    ['green', 'Hugo Carrasco', 'Masculino', 18, 'Paris', 'Sistemas', '22.000,00'],
    ['orange', 'Angel Gomez', 'Masculino', 18, 'Medellín', 'Ingenieria', '10.000,00'],
    ['orange', 'Gema Alarcon', 'Femenino', 18, 'Lima', 'Medicina', '3.000,00'],
    ['blue', 'Salvador Lozano', 'Masculino', 18, 'Paris', 'Arquitectura', '5.000,00'],
    ['blue', 'Josefina Mesa', 'Femenino', 18, 'Paris', 'Derecho', '22.000,00'],
    ['green', 'Alvaro Delgado', 'Masculino', 18, 'Medellín', 'Sistemas', '10.000,00'],
    ['orange', 'Esteban Hidalgo', 'Masculino', 21, 'Medellín', 'Medicina', '3.000,00'],
    ['orange', 'Sergio Dominguez', 'Masculino', 18, 'Lima', 'Arquitectura', '5.000,00'],
    [''], [''], ['']
];

const columnClass = ['', 'center', 'center age', '', '', 'money'];

// cells outside the data block
const extra = {
    H1: ['strong', 'Color :'],
    I1: ['selected', ''],
    H2: ['strong', 'Suma :'],
    I2: ['money', '<span>$ <span>72.000,00</span></span>']
};

let html = '<colgroup>' + widths.map(w => `<col style="width:${w}px">`).join('') + '</colgroup>';
html += '<thead><tr><th class="corner"></th>';
html += letters.map(l => `<th${l === 'I' ? ' class="current"' : ''}>${l}</th>`).join('') + '</tr></thead><tbody>';

rows.forEach(([color, ...data], i) => {
    const n = i + 1;
    html += `<tr class="${color}${n < 3 ? ' tall' : ''}"><th${n === 1 ? ' class="current"' : ''}>${n}</th>`;
    letters.forEach((letter, c) => {
        if (c > 5) {
            const [name, value] = extra[letter + n] || ['', ''];
            html += `<td class="free ${name}">${value}</td>`;
            return;
        }
        let value = data[c] === undefined ? '' : data[c];
        if (c === 5 && value && n > 1) {
            value = `<span>$ <span>${value}</span></span>`;
        }
        html += `<td class="${n > 1 ? columnClass[c] : ''}">${value}</td>`;
    });
    html += '</tr>';
});

document.getElementById('cells').innerHTML = html + '</tbody>';
```
